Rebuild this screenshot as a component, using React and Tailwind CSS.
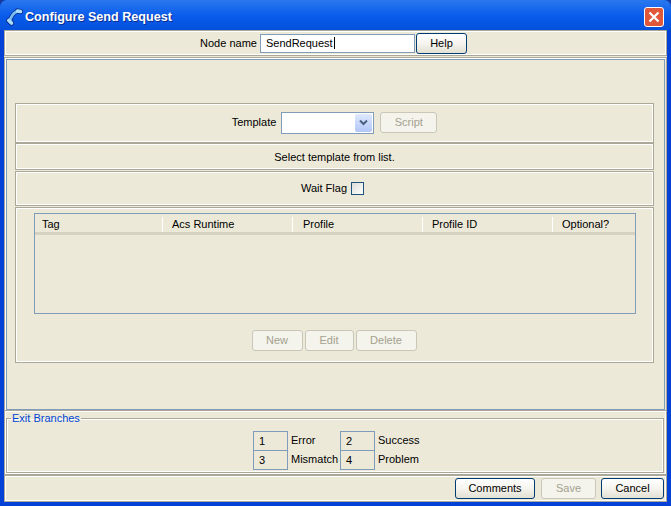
import React from "react";

const etched = "border border-[#aca899] shadow-[inset_1px_1px_0_#fff,inset_-1px_-1px_0_#fff]";

const Button = ({ label, width, disabled }) => (
  <button
    className={
      disabled
        ? `h-[21px] ${width} pb-px rounded-[3px] border border-[#c9c7ba] bg-[#f4f3ec] text-[#a3a18f]`
        : `h-[21px] ${width} rounded-[3px] border border-[#003c74] bg-gradient-to-b from-white via-[#f5f4ee] to-[#e3e0d4] text-black`
    }
  >
    {label}
  </button>
);

const BranchBox = ({ num }) => (
  <div className="w-[35px] h-[20px] -mt-px first:mt-0 border border-[#7f9db9] pl-[5px] leading-[18px]">{num}</div>
);

const columns = [
  { name: "Tag", width: "w-[128px] pl-[7px]" },
  { name: "Acs Runtime", width: "w-[130px] pl-[9px]" },
  { name: "Profile", width: "w-[130px] pl-[10px]" },
  { name: "Profile ID", width: "w-[130px] pl-[9px]" },
  { name: "Optional?", width: "flex-1 pl-[9px]" },
];

const App = () => {
  return (
    <div className="w-[671px] h-[506px] bg-[#16399c]">
      <div className="w-[671px] h-[506px] overflow-hidden flex flex-col rounded-t-[7px] bg-[#0441d6] text-[11px] text-black font-['Liberation_Sans',sans-serif]">
        {/* Title bar */}
        <div className="h-[30px] shrink-0 flex items-center pt-[3px] pl-[6px] pr-[7px] bg-gradient-to-b from-[#2a78ee] via-[#0a5cec] to-[#0450dc]">
          <svg width="17" height="18" viewBox="0 0 17 18" className="mr-[2px] mt-px">
            <g fill="none" strokeLinecap="round">
              <path d="M13 3.5 C8.5 3 4 9 4 14" stroke="#0a2c8c" strokeWidth="4.4" />
              <path d="M11.5 3 L14.5 3.5 M2.8 12.5 L5.5 15" stroke="#0a2c8c" strokeWidth="5.2" />
              <path d="M13 3.5 C8.5 3 4 9 4 14" stroke="#78bdf2" strokeWidth="2.8" />
              <path d="M11.5 3 L14.5 3.5 M2.8 12.5 L5.5 15" stroke="#a6dcfa" strokeWidth="3.6" />
            </g>
          </svg>
          <span className="mt-[1px] text-[12.6px] font-bold text-white [text-shadow:1px_1px_0_#0a2c8c]">Configure Send Request</span>
          <div className="ml-auto w-[20px] h-[20px] rounded-[3px] border border-white bg-[#e0573a] flex items-center justify-center">
            <svg width="12" height="12" viewBox="0 0 12 12">
              <path d="M1.5 1.5 L10.5 10.5 M10.5 1.5 L1.5 10.5" stroke="#fff" strokeWidth="2.2" />
            </svg>
          </div>
        </div>

        {/* Window body */}
        <div className="mx-[4px] h-[472px] shrink-0 bg-[#ece9d8] flex flex-col">
          {/* Node name */}
          <div className={`h-[26px] flex items-center justify-center pr-[4px] ${etched}`}>
            <span className="mr-[3px]">Node name</span>
            <div className="w-[155px] h-[19px] border border-[#7f9db9] bg-white pl-[5px] leading-[17px]">
              SendRequest<span className="border-l border-black ml-px" />
            </div>
            <div className="ml-px">
              <Button label="Help" width="w-[51px]" />
            </div>
          </div>

          {/* Main panel */}
          <div className="mt-px h-[353px] border border-b-0 border-[#aca899] p-[1px] pb-0 shadow-[inset_1px_1px_0_#fff]">
            <div className="h-full border border-[#7f9db9] pt-[43px] pl-[8px] pr-[10px] flex flex-col">
              <div className={`h-[40px] pb-px flex items-center justify-center ${etched}`}>
                <span className="mr-[5px]">Template</span>
                <div className="w-[93px] h-[22px] border border-[#7f9db9] bg-white flex justify-end p-px">
                  <div className="w-[17px] h-full rounded-[2px] bg-gradient-to-b from-[#dfe8fd] to-[#b2c7f8] flex items-center justify-center">
                    <svg width="9" height="7" viewBox="0 0 9 7">
                      <path d="M1 1.5 L4.5 5 L8 1.5" fill="none" stroke="#4d6185" strokeWidth="2" />
                    </svg>
                  </div>
                </div>
                <div className="ml-[6px]">
                  <Button label="Script" width="w-[57px]" disabled />
                </div>
              </div>
              <div className={`h-[27px] pt-px flex items-center justify-center ${etched}`}>Select template from list.</div>
              <div className={`mt-px h-[35px] pr-[4px] flex items-center justify-center ${etched}`}>
                <span className="mr-[4px]">Wait Flag</span>
                <div className="w-[13px] h-[13px] border border-[#1c5180] bg-gradient-to-br from-[#dcdcd7] to-white" />
              </div>
              <div className={`mt-px h-[156px] pl-[18px] pr-[17px] pt-[5px] ${etched}`}>
                {/* Table */}
                <div className="h-[101px] border border-[#7f9db9]">
                  <div className="h-[21px] flex border-b-[3px] border-[#d6d2c2]">
                    {columns.map((col) => (
                      <div key={col.name} className={`${col.width} mt-[3px] leading-[14px] border-r border-white last:border-r-0`}>
                        {col.name}
                      </div>
                    ))}
                  </div>
                </div>
                <div className="mt-[16px] pr-[2px] flex justify-center gap-[2px]">
                  <Button label="New" width="w-[51px]" disabled />
                  <Button label="Edit" width="w-[49px]" disabled />
                  <Button label="Delete" width="w-[61px]" disabled />
                </div>
              </div>
            </div>
          </div>

          {/* Exit branches */}
          <div className={`h-[65px] pl-[1px] pr-[2px] pt-px ${etched}`}>
            <fieldset className="h-[61px] border border-[#aca899] shadow-[inset_1px_1px_0_#fff,inset_-1px_-1px_0_#fff] m-0">
              <legend className="ml-[4px] px-px text-[#0046d5] leading-[13px]">Exit Branches</legend>
              <div className="mt-[6px] ml-[246px] flex">
                <div className="flex flex-col">
                  <BranchBox num="1" />
                  <BranchBox num="3" />
                </div>
                <div className="w-[52px] pl-[3px] leading-[19px]">
                  <div>Error</div>
                  <div>Mismatch</div>
                </div>
                <div className="flex flex-col">
                  <BranchBox num="2" />
                  <BranchBox num="4" />
                </div>
                <div className="pl-[3px] leading-[19px]">
                  <div>Success</div>
                  <div>Problem</div>
                </div>
              </div>
            </fieldset>
          </div>

          {/* Footer buttons */}
          <div className={`h-[27px] flex items-center justify-end gap-[5px] pr-[2px] ${etched}`}>
            <div className="mr-px"><Button label="Comments" width="w-[80px]" /></div>
            <Button label="Save" width="w-[55px]" disabled />
            <Button label="Cancel" width="w-[63px]" />
          </div>
        </div>
      </div>
    </div>
  );
};

export default App;
